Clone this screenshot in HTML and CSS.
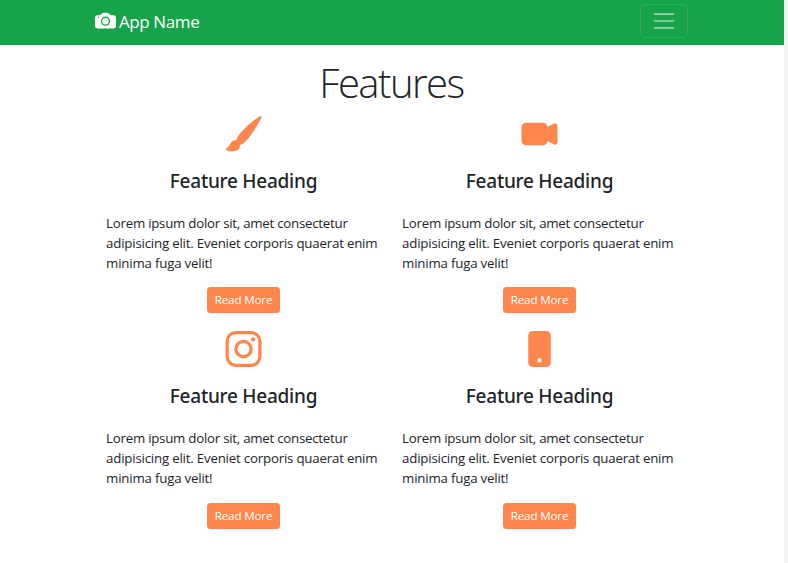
FILE: index.html
```html
<!DOCTYPE html>
<html lang="en">
<head>
<meta charset="utf-8">
<title>App Name</title>
<link rel="stylesheet" href="styles.css">
</head>
<body>
<nav class="navbar">
  <div class="container bar">
    <a class="brand"><svg class="brand-icon" viewBox="0 0 16 16"><path d="M10.5 8.5a2.5 2.5 0 1 1-5 0 2.5 2.5 0 0 1 5 0"/><path d="M2 4a2 2 0 0 0-2 2v6a2 2 0 0 0 2 2h12a2 2 0 0 0 2-2V6a2 2 0 0 0-2-2h-1.172a2 2 0 0 1-1.414-.586l-.828-.828A2 2 0 0 0 9.172 2H6.828a2 2 0 0 0-1.414.586l-.828.828A2 2 0 0 1 3.172 4zm.5 2a.5.5 0 1 1 0-1 .5.5 0 0 1 0 1m9 2.5a3.5 3.5 0 1 1-7 0 3.5 3.5 0 0 1 7 0"/></svg><span class="brand-name">App Name</span></a>
    <button class="toggler" aria-label="Menu"><svg viewBox="0 0 30 30"><path d="M4 7h22M4 15h22M4 23h22"/></svg></button>
  </div>
</nav>
<main class="container">
  <h1 class="title"><span>Features</span></h1>
  <div class="grid">
    <section class="feature">
      <svg class="icon" viewBox="0 0 16 16"><path d="M15.825.12a.5.5 0 0 1 .132.584c-1.53 3.43-4.743 8.17-7.095 10.64a6.1 6.1 0 0 1-2.373 1.534c-.018.227-.06.538-.16.868-.201.659-.667 1.479-1.708 1.74a8.1 8.1 0 0 1-3.078.132 4 4 0 0 1-.562-.135 1.4 1.4 0 0 1-.466-.247.7.7 0 0 1-.204-.288.62.62 0 0 1 .004-.443c.095-.245.316-.38.461-.452.394-.197.625-.453.867-.826.095-.144.184-.297.287-.472l.117-.198c.151-.255.326-.54.546-.848.528-.739 1.201-.925 1.746-.896q.19.012.348.048c.062-.172.142-.38.238-.608.261-.619.658-1.419 1.187-2.069 2.176-2.67 6.18-6.206 9.117-8.104a.5.5 0 0 1 .596.04"/></svg>
      <h2><span>Feature Heading</span></h2>
      <p><span class="l1">Lorem ipsum dolor sit, amet consectetur</span> <span class="l2">adipisicing elit. Eveniet corporis quaerat enim</span> <span class="l3">minima fuga velit!</span></p>
      <a class="btn"><span>Read More</span></a>
    </section>
    <section class="feature">
      <svg class="icon" viewBox="0 0 16 16"><path d="M0 5a2 2 0 0 1 2-2h7.5a2 2 0 0 1 1.983 1.738l3.11-1.382A1 1 0 0 1 16 4.269v7.462a1 1 0 0 1-1.406.913l-3.111-1.382A2 2 0 0 1 9.5 13H2a2 2 0 0 1-2-2z"/></svg>
      <h2><span>Feature Heading</span></h2>
      <p><span class="l1">Lorem ipsum dolor sit, amet consectetur</span> <span class="l2">adipisicing elit. Eveniet corporis quaerat enim</span> <span class="l3">minima fuga velit!</span></p>
      <a class="btn"><span>Read More</span></a>
    </section>
    <section class="feature">
      <svg class="icon outline" viewBox="0 0 16 16"><rect x=".72" y=".72" width="14.56" height="14.56" rx="3.9"/><circle cx="8" cy="8" r="3.4"/><circle class="dot" cx="12.27" cy="3.73" r=".96"/></svg>
      <h2><span>Feature Heading</span></h2>
      <p><span class="l1">Lorem ipsum dolor sit, amet consectetur</span> <span class="l2">adipisicing elit. Eveniet corporis quaerat enim</span> <span class="l3">minima fuga velit!</span></p>
      <a class="btn"><span>Read More</span></a>
    </section>
    <section class="feature">
      <svg class="icon" viewBox="0 0 16 16"><path d="M3 2a2 2 0 0 1 2-2h6a2 2 0 0 1 2 2v12a2 2 0 0 1-2 2H5a2 2 0 0 1-2-2zm6 11a1 1 0 1 0-2 0 1 1 0 0 0 2 0"/></svg>
      <h2><span>Feature Heading</span></h2>
      <p><span class="l1">Lorem ipsum dolor sit, amet consectetur</span> <span class="l2">adipisicing elit. Eveniet corporis quaerat enim</span> <span class="l3">minima fuga velit!</span></p>
      <a class="btn"><span>Read More</span></a>
    </section>
  </div>
</main>
</body>
</html>
```
FILE: styles.css
```css
* { box-sizing: border-box; }
html { background: #fff; }
body {
  margin: 0;
  min-height: 563px;
  border-right: 4px solid #f1f2f4;
  font-family: "Open Sans", "Noto Sans", sans-serif;
  font-size: 13.3px;
  color: #212529;
  overflow: hidden;
}
.container { width: 592px; margin-left: 95.5px; }
.navbar { height: 45px; background: #16a34a; }
.bar { display: flex; justify-content: space-between; height: 42px; align-items: center; }
.brand { display: flex; align-items: center; color: #fff; font-size: 17px; gap: 3px; }
.brand-icon { width: 21px; height: 21px; fill: currentColor; margin: -2px 0 0 -.5px; }
.brand-name { line-height: 24px; padding-top: 2px; letter-spacing: -0.4px; }
.toggler {
  width: 48px; height: 34px; padding: 0; background: none;
  border: 1px solid rgba(255,255,255,.1); border-radius: 5px;
  display: flex; align-items: center; justify-content: center;
}
.toggler svg { width: 26px; height: 26px; stroke: rgba(255,255,255,.55); stroke-width: 2; stroke-linecap: round; fill: none; }
.title { margin: 0; height: 70.5px; padding-top: 13px; text-align: center; font-weight: 300; font-size: 40px; line-height: 50px; letter-spacing: -1.5px; }
.grid { display: grid; grid-template-columns: 1fr 1fr; grid-auto-rows: 215.3px; }
.feature { display: flex; flex-direction: column; align-items: center; padding: 0 10px; }
.icon { width: 37px; height: 36px; fill: #ff864c; }
.outline { fill: none; stroke: #ff864c; stroke-width: 1.44; }
.outline .dot { fill: #ff864c; stroke: none; }
h2 { margin: 17px 0 0; font-family: "Noto Sans", "Open Sans", sans-serif; font-size: 19px; line-height: 24px; font-weight: 500; letter-spacing: -0.25px; }
p { margin: 20px 0 0; padding-left: .5px; width: 275.8px; line-height: 20.3px; white-space: nowrap; }
p span { display: block; letter-spacing: -0.21px; }
.l1 { letter-spacing: -0.26px; }
.btn { margin-top: 14px; width: 72.5px; height: 26px; border-radius: 3.5px; background: #ff864c; color: #fff; font-size: 11.6px; letter-spacing: -.15px; line-height: 26px; text-align: center; white-space: nowrap; }
```
